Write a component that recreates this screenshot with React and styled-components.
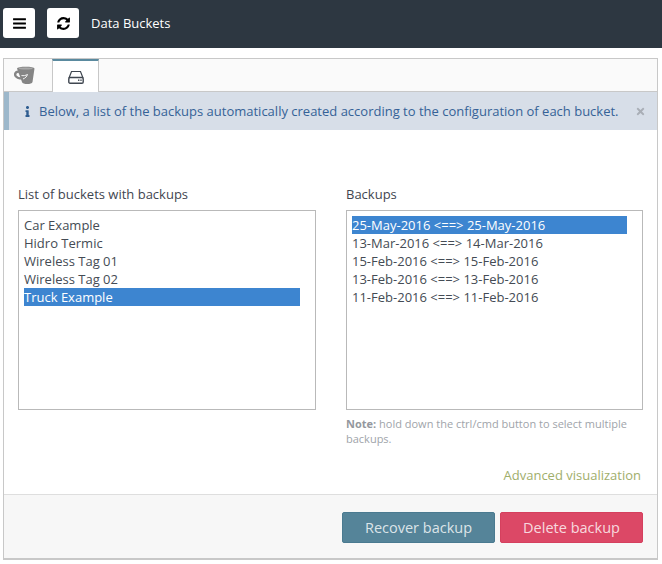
import React from "react";
import styled, { createGlobalStyle } from "styled-components";
import { FaInfo, FaTimes } from "react-icons/fa";

const Global = createGlobalStyle`
  html, body { margin: 0; padding: 0; background: #fff; }
  body { font-family: "Open Sans", sans-serif; font-size: 13px; color: #444b54; }
  * { box-sizing: border-box; }
`;

const Page = styled.div`
  width: 662px;
  height: 564px;
  overflow: hidden;
  display: flex;
  flex-direction: column;
`;

const Header = styled.header`
  height: 48px;
  background: #2d3741;
  display: flex;
  align-items: center;
  padding: 0 0 2px 3px;
  flex: none;
`;

const IconButton = styled.button`
  width: 32px;
  height: 30px;
  margin-right: 12px;
  border: 0;
  border-radius: 3px;
  background: #fff;
  color: #000;
  display: flex;
  align-items: center;
  justify-content: center;
  padding: 0;
`;

const Title = styled.span`
  color: #fff;
  font-size: 13px;
`;

const Card = styled.section`
  margin: 10px 4px 0 3px;
  height: 502px;
  border: 1px solid #c8c8c8;
  border-bottom-width: 2px;
  display: flex;
  flex-direction: column;
  background: #fff;
`;

const Tabs = styled.nav`
  height: 33px;
  display: flex;
  background: #fafafa;
  border-bottom: 1px solid #c8c8c8;
  flex: none;
`;

const Tab = styled.div`
  width: ${(p) => (p.$active ? 47 : 48)}px;
  height: ${(p) => (p.$active ? 33 : 32)}px;
  display: flex;
  align-items: center;
  justify-content: center;
  background: ${(p) => (p.$active ? "#fff" : "transparent")};
  border-top: ${(p) => (p.$active ? "2px solid #5a8a9f" : "0")};
  border-left: ${(p) => (p.$active ? "1px solid #c8c8c8" : "0")};
  border-right: ${(p) => (p.$active ? "1px solid #c8c8c8" : "0")};
`;

const BucketIcon = styled.svg`
  margin-right: 7px;
  flex: none;
`;

const Alert = styled.div`
  height: 38px;
  background: #d7dee8;
  border-left: 5px solid #9db8cb;
  display: flex;
  align-items: center;
  padding: 0 11px 0 15px;
  color: #356297;
  font-size: 13px;
  flex: none;
`;

const AlertIcon = styled.span`
  display: flex;
  font-size: 11px;
  width: 15px;
  color: #2f5d90;
  svg { margin-left: -2px; }
`;

const AlertText = styled.span`
  flex: 1;
  white-space: nowrap;
`;

const Close = styled.span`
  display: flex;
  font-size: 11px;
  color: #a9aeb6;
`;

const Body = styled.div`
  flex: 1;
  padding: 55px 14px 0 14px;
  display: grid;
  grid-template-columns: 298px 297px;
  column-gap: 30px;
  align-content: start;
`;

const Column = styled.div`
  display: flex;
  flex-direction: column;
`;

const Label = styled.label`
  height: 18px;
  line-height: 18px;
  margin-bottom: 7px;
  font-size: 13px;
  color: #3f4650;
`;

const ListBox = styled.div`
  height: 200px;
  border: 1px solid #b9b9b9;
  padding: 5px 15px 0 5px;
`;

const Option = styled.div`
  height: 18px;
  line-height: 18px;
  font-size: 13px;
  color: ${(p) => (p.$selected ? "#fff" : "#444b54")};
  background: ${(p) => (p.$selected ? "#3d85d0" : "transparent")};
`;

const Note = styled.p`
  margin: 6px 0 0 0;
  font-size: 11px;
  line-height: 15px;
  color: #a0a4aa;
  strong { font-weight: 700; color: #94989e; }
`;

const Advanced = styled.a`
  display: block;
  text-align: right;
  margin: 20px 2px 0 0;
  line-height: 18px;
  font-size: 13px;
  color: #9fae6b;
`;

const Footer = styled.footer`
  height: 64px;
  background: #f7f7f7;
  border-top: 1px solid #dedede;
  display: flex;
  justify-content: flex-end;
  align-items: flex-start;
  gap: 5px;
  padding: 17px 14px 0 0;
  flex: none;
`;

const Action = styled.button`
  width: ${(p) => p.$w}px;
  height: 31px;
  border: 1px solid ${(p) => p.$edge};
  border-radius: 2px;
  background: ${(p) => p.$bg};
  color: rgba(255, 255, 255, 0.8);
  font-family: "Open Sans", sans-serif;
  font-size: 14.5px;
  padding: 0;
`;

const buckets = ["Car Example", "Hidro Termic", "Wireless Tag 01", "Wireless Tag 02", "Truck Example"];
const backups = [
  "25-May-2016 <==> 25-May-2016",
  "13-Mar-2016 <==> 14-Mar-2016",
  "15-Feb-2016 <==> 15-Feb-2016",
  "13-Feb-2016 <==> 13-Feb-2016",
  "11-Feb-2016 <==> 11-Feb-2016",
];

const Bars = () => (
  <svg width="15" height="15" viewBox="0 0 1792 1792" aria-hidden="true">
    <path fill="currentColor" d="M1664 1344v128q0 26-19 45t-45 19h-1408q-26 0-45-19t-19-45v-128q0-26 19-45t45-19h1408q26 0 45 19t19 45zm0-512v128q0 26-19 45t-45 19h-1408q-26 0-45-19t-19-45v-128q0-26 19-45t45-19h1408q26 0 45 19t19 45zm0-512v128q0 26-19 45t-45 19h-1408q-26 0-45-19t-19-45v-128q0-26 19-45t45-19h1408q26 0 45 19t19 45z" />
  </svg>
);

const Refresh = () => (
  <svg width="15" height="15" viewBox="0 0 1792 1792" aria-hidden="true">
    <path fill="currentColor" d="M1639 1056q0 5-1 7-64 268-268 434.500t-478 166.500q-146 0-282.500-55t-243.500-157l-129 129q-19 19-45 19t-45-19-19-45v-448q0-26 19-45t45-19h448q26 0 45 19t19 45-19 45l-137 137q71 66 161 102t187 36q134 0 250-65t186-179q11-17 53-117 8-23 30-23h192q13 0 22.500 9.500t9.500 22.500zm25-800v448q0 26-19 45t-45 19h-448q-26 0-45-19t-19-45 19-45l138-138q-148-137-349-137-134 0-250 65t-186 179q-11 17-53 117-8 23-30 23h-199q-13 0-22.500-9.500t-9.500-22.500v-7q65-268 270-434.500t480-166.500q146 0 284 55.500t245 156.500l130-129q19-19 45-19t45 19 19 45z" />
  </svg>
);

const Bucket = () => (
  <BucketIcon width="21" height="19" viewBox="0 0 21 19" aria-hidden="true">
    <path d="M3 2.500C3 0 20.500 0 20.500 2.500L18.500 16C18 18.800 8.500 18.800 8 16Z" fill="#858585" />
    <ellipse cx="11.700" cy="2.500" rx="7" ry="1" fill="#a8a8a8" />
    <path d="M5 6C1.500 5 .2 8.500 2 10.500C4 12.500 7.500 13 10 11.500" fill="none" stroke="#858585" strokeWidth="2.400" />
    <path d="M7.500 9.500C9.500 10 11.500 9.500 13.500 8.500C12.800 10.500 11.500 12 9 13" fill="none" stroke="#f4f4f4" strokeWidth="1" />
  </BucketIcon>
);

const Disk = () => (
  <svg width="16" height="14" viewBox="0 0 16 14" fill="none" aria-hidden="true">
    <path d="M1 8L3.500 1.500H12.500L15 8" stroke="#3f4650" strokeWidth="1.200" />
    <rect x="0.800" y="7.500" width="14.400" height="5.700" rx="1.200" stroke="#3f4650" strokeWidth="1.400" />
    <rect x="10" y="9.500" width="1.400" height="1.400" fill="#3f4650" />
    <rect x="12.300" y="9.500" width="1.400" height="1.400" fill="#3f4650" />
  </svg>
);

export default function App() {
  return (
    <Page>
      <Global />
      <Header>
        <IconButton aria-label="Menu"><Bars /></IconButton>
        <IconButton aria-label="Refresh"><Refresh /></IconButton>
        <Title>Data Buckets</Title>
      </Header>
      <Card>
        <Tabs>
          <Tab><Bucket /></Tab>
          <Tab $active><Disk /></Tab>
        </Tabs>
        <Alert>
          <AlertIcon><FaInfo /></AlertIcon>
          <AlertText>Below, a list of the backups automatically created according to the configuration of each bucket.</AlertText>
          <Close><FaTimes /></Close>
        </Alert>
        <Body>
          <Column>
            <Label>List of buckets with backups</Label>
            <ListBox>
              {buckets.map((b) => (
                <Option key={b} $selected={b === "Truck Example"}>{b}</Option>
              ))}
            </ListBox>
          </Column>
          <Column>
            <Label>Backups</Label>
            <ListBox>
              {backups.map((b, i) => (
                <Option key={b} $selected={i === 0}>{b}</Option>
              ))}
            </ListBox>
            <Note><strong>Note:</strong> hold down the ctrl/cmd button to select multiple backups.</Note>
            <Advanced>Advanced visualization</Advanced>
          </Column>
        </Body>
        <Footer>
          <Action $w={153} $bg="#558499" $edge="#4a7a90">Recover backup</Action>
          <Action $w={143} $bg="#dc4866" $edge="#d5405e">Delete backup</Action>
        </Footer>
      </Card>
    </Page>
  );
}
